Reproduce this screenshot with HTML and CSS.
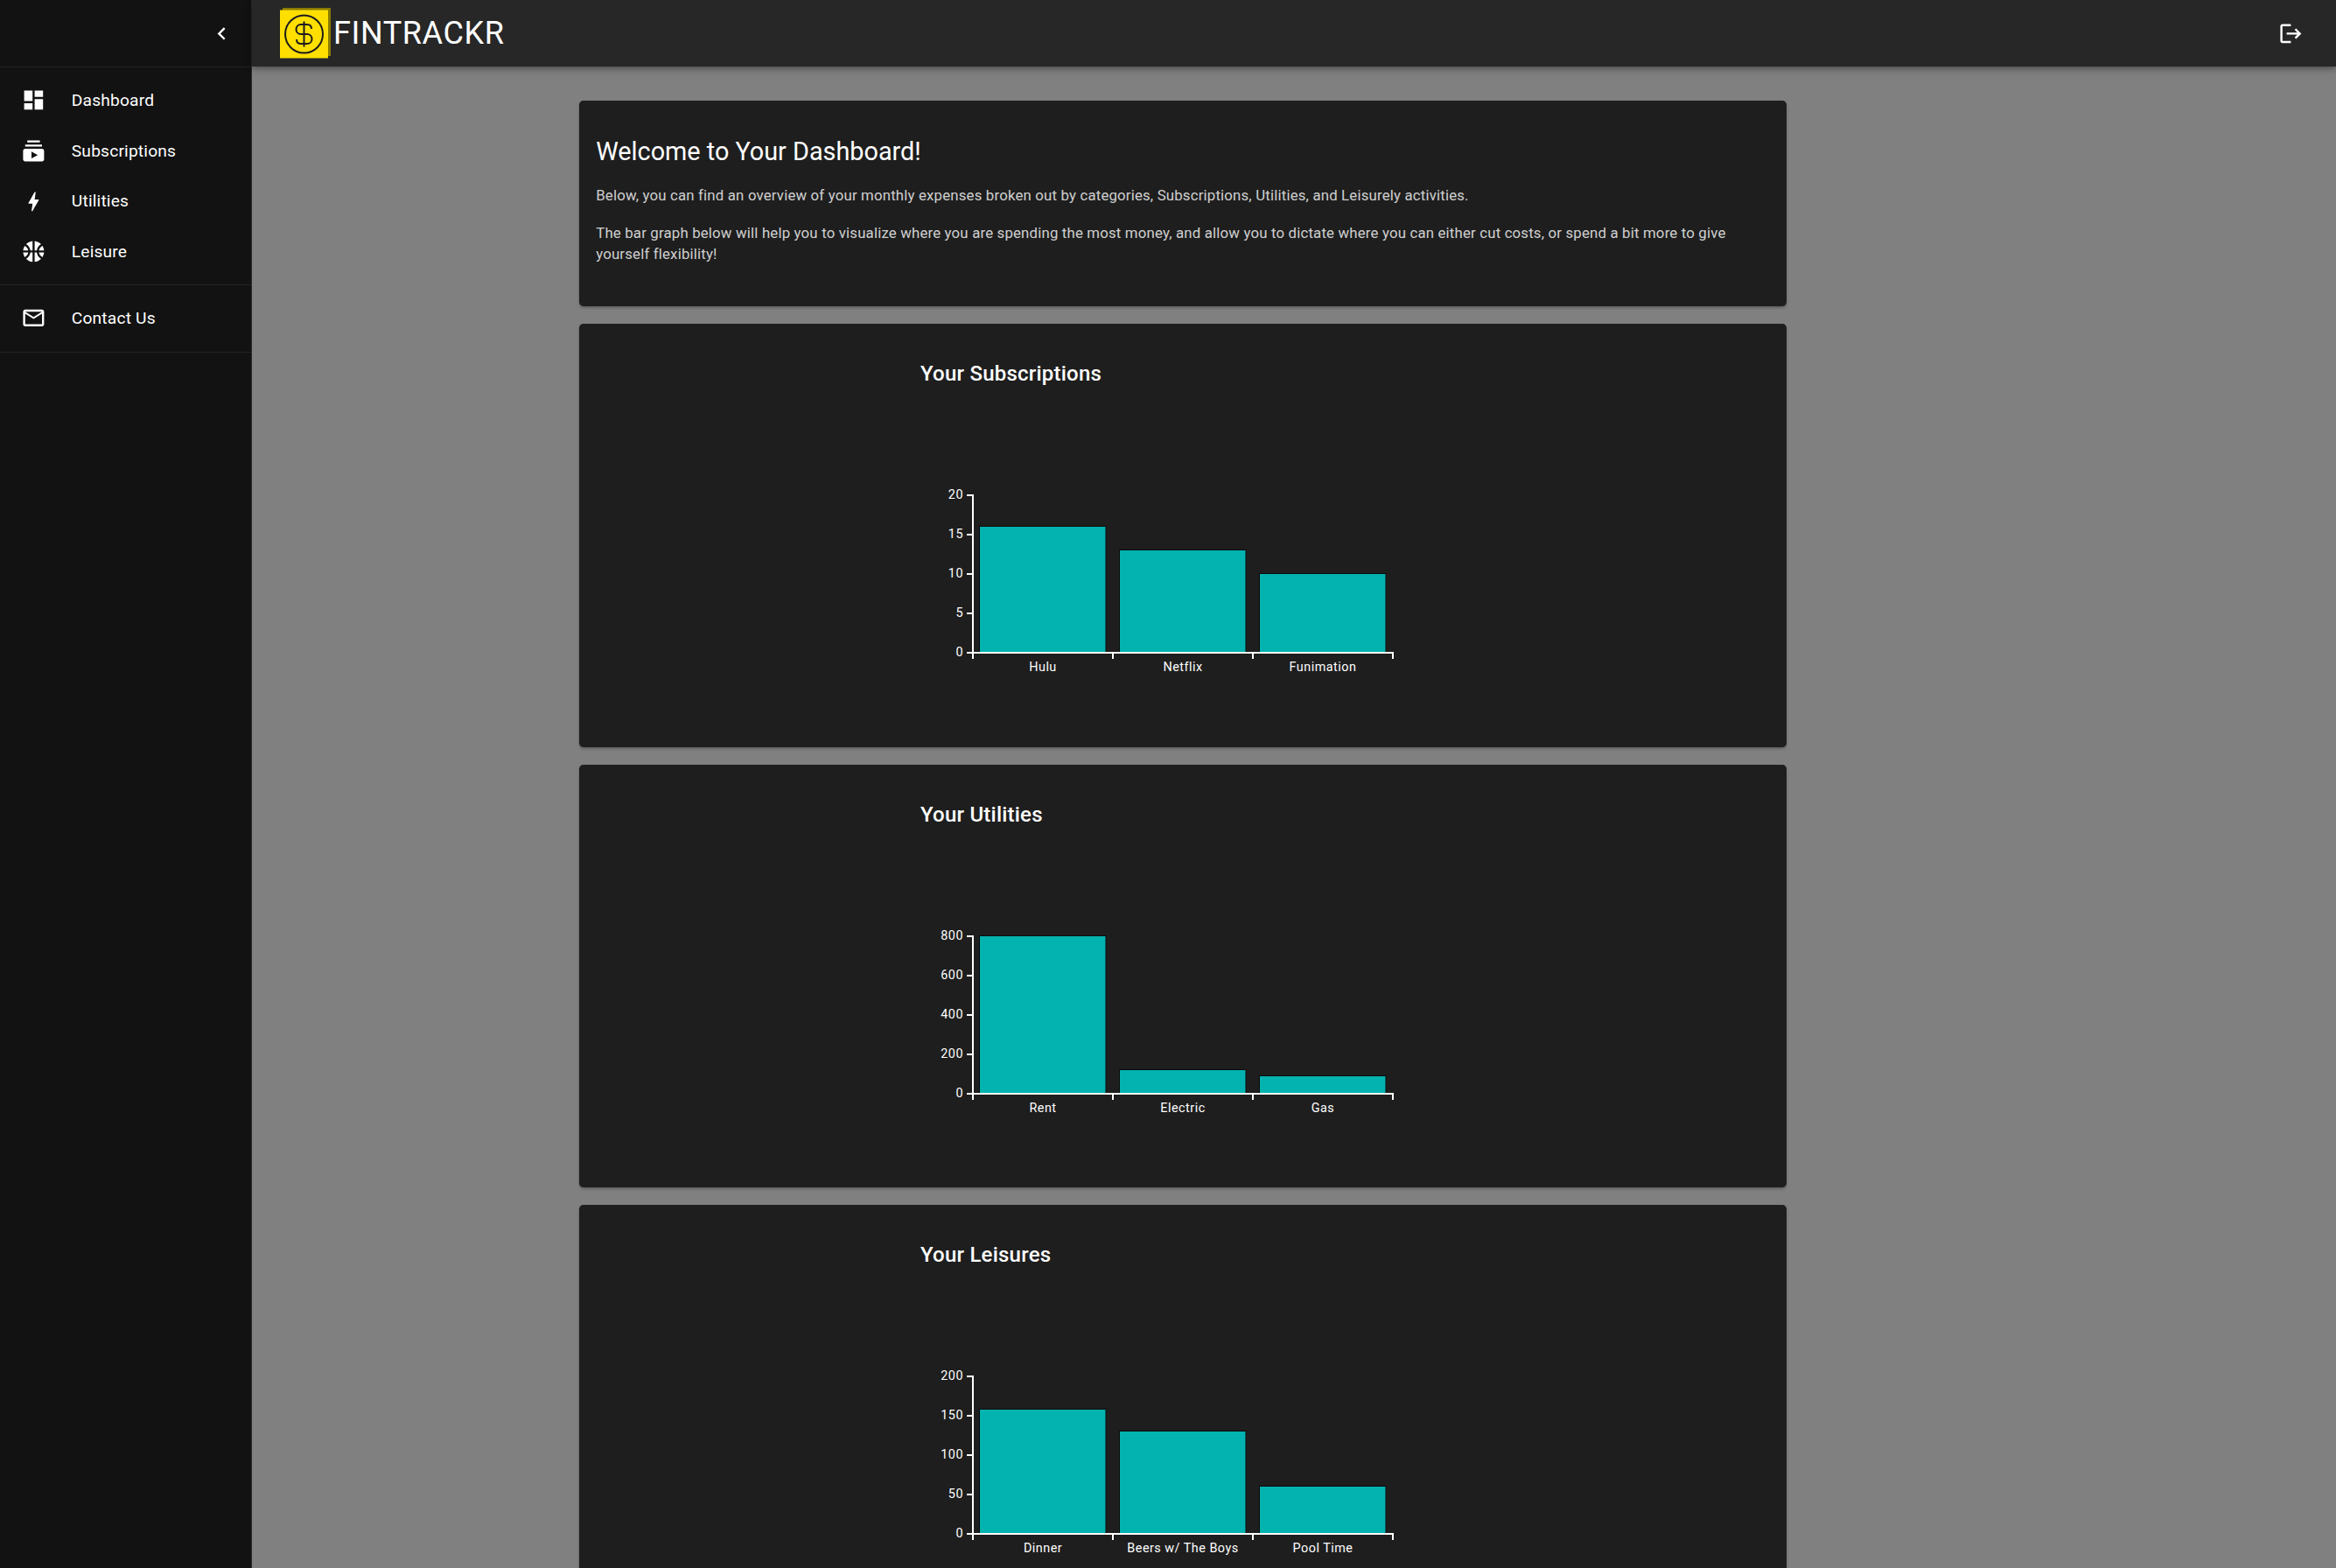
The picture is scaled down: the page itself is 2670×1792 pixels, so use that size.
FILE: index.html
```html
<!DOCTYPE html>
<html lang="en">
<head>
  <meta charset="UTF-8">
  <title>Fintrackr</title>
  <link rel="stylesheet" href="styles.css">
</head>
<body>
  <div class="app">
    <nav class="sidebar">
      <div class="sidebar-head">
        <svg class="icon" viewBox="0 0 24 24"><path d="M15.41 7.41 14 6l-6 6 6 6 1.41-1.41L10.83 12z"/></svg>
      </div>
      <ul class="nav-list">
        <li class="nav-item">
          <svg class="icon" viewBox="0 0 24 24"><path d="M3 13h8V3H3v10zm0 8h8v-6H3v6zm10 0h8V11h-8v10zm0-18v6h8V3h-8z"/></svg>
          <span>Dashboard</span>
        </li>
        <li class="nav-item">
          <svg class="icon" viewBox="0 0 24 24"><path d="M20 8H4V6h16v2zm-2-6H6v2h12V2zm4 10v8c0 1.1-.9 2-2 2H4c-1.1 0-2-.9-2-2v-8c0-1.1.9-2 2-2h16c1.1 0 2 .9 2 2zm-6 4-6-3.27v6.53L16 16z"/></svg>
          <span>Subscriptions</span>
        </li>
        <li class="nav-item">
          <svg class="icon" viewBox="0 0 24 24"><path d="M11 21h-1l1-7H7.5c-.58 0-.57-.32-.38-.66.19-.34.05-.08.07-.12C8.48 10.94 10.42 7.54 13 3h1l-1 7h3.5c.49 0 .56.33.47.51l-.07.15C12.96 17.55 11 21 11 21z"/></svg>
          <span>Utilities</span>
        </li>
        <li class="nav-item">
          <svg class="icon" viewBox="0 0 24 24"><path d="M17.09 11h4.86c-.16-1.61-.71-3.11-1.54-4.4-1.73.83-2.99 2.45-3.32 4.4zM6.91 11c-.33-1.95-1.59-3.57-3.32-4.4-.83 1.29-1.38 2.79-1.54 4.4h4.86zM15.07 11c.32-2.59 1.88-4.79 4.06-6-1.6-1.63-3.74-2.71-6.13-2.95V11h2.07zM8.93 11H11V2.05C8.61 2.29 6.46 3.37 4.87 5c2.18 1.21 3.74 3.41 4.06 6zM15.07 13H13v8.95c2.39-.24 4.54-1.32 6.13-2.95-2.18-1.21-3.74-3.41-4.06-6zM3.59 17.4c1.72-.83 2.99-2.46 3.32-4.4H2.05c.16 1.61.71 3.11 1.54 4.4zM17.09 13c.33 1.95 1.59 3.57 3.32 4.4.83-1.29 1.38-2.79 1.54-4.4h-4.86zM8.93 13c-.32 2.59-1.88 4.79-4.06 6 1.6 1.63 3.74 2.71 6.13 2.95V13H8.93z"/></svg>
          <span>Leisure</span>
        </li>
      </ul>
      <ul class="nav-list nav-list-last">
        <li class="nav-item">
          <svg class="icon" viewBox="0 0 24 24"><path d="M20 4H4c-1.1 0-1.99.9-1.99 2L2 18c0 1.1.9 2 2 2h16c1.1 0 2-.9 2-2V6c0-1.1-.9-2-2-2zm0 14H4V8l8 5 8-5v10zm-8-7L4 6h16l-8 5z"/></svg>
          <span>Contact Us</span>
        </li>
      </ul>
    </nav>

    <div class="content">
      <header class="topbar">
        <div class="brand">
          <svg class="logo" viewBox="0 0 58 58">
            <rect class="logo-shadow" x="3" y="0" width="55" height="55"/>
            <rect class="logo-face" x="0" y="2.5" width="55" height="55"/>
            <circle class="logo-line" cx="27.5" cy="30" r="21.5"/>
            <path class="logo-line" d="M36 24c0-3-2-5-5-5h-7c-3.3 0-5.5 2.4-5.5 5.5s2.2 5.5 5.5 5.5h7c3.3 0 5.5 2.4 5.5 5.5s-2.2 5.5-5.5 5.5h-7c-3 0-5-2-5-5M27.5 15.5v29"/>
          </svg>
          <span class="brand-name">FINTRACKR</span>
        </div>
        <svg class="icon" viewBox="0 0 24 24"><path d="m17 7-1.41 1.41L18.17 11H8v2h10.17l-2.58 2.58L17 17l5-5zM4 5h8V3H4c-1.1 0-2 .9-2 2v14c0 1.1.9 2 2 2h8v-2H4V5z"/></svg>
      </header>

      <main class="main">
        <section class="card intro">
          <h1>Welcome to Your Dashboard!</h1>
          <p>Below, you can find an overview of your monthly expenses broken out by categories, Subscriptions, Utilities, and Leisurely activities.</p>
          <p>The bar graph below will help you to visualize where you are spending the most money, and allow you to dictate where you can either cut costs, or spend a bit more to give yourself flexibility!</p>
        </section>

        <section class="card chart-card">
          <div class="chart-wrap">
            <h2>Your Subscriptions</h2>
            <svg class="chart" viewBox="0 0 600 360">
              <rect class="bar" x="67.5" y="155.5" width="144.5" height="144.5"/>
              <rect class="bar" x="227.5" y="182.5" width="144.5" height="117.5"/>
              <rect class="bar" x="387.5" y="209.5" width="144.5" height="90.5"/>
              <path class="axis" d="M53 120h7v180h480v7M53 165h7M53 210h7M53 255h7M53 300h7v7M220 300v7M380 300v7"/>
              <text class="tick-y" x="49" y="120">20</text>
              <text class="tick-y" x="49" y="165">15</text>
              <text class="tick-y" x="49" y="210">10</text>
              <text class="tick-y" x="49" y="255">5</text>
              <text class="tick-y" x="49" y="300">0</text>
              <text class="tick-x" x="140" y="317">Hulu</text>
              <text class="tick-x" x="300" y="317">Netflix</text>
              <text class="tick-x" x="460" y="317">Funimation</text>
            </svg>
          </div>
        </section>

        <section class="card chart-card">
          <div class="chart-wrap">
            <h2>Your Utilities</h2>
            <svg class="chart" viewBox="0 0 600 360">
              <rect class="bar" x="67.5" y="119.5" width="144.5" height="180.5"/>
              <rect class="bar" x="227.5" y="272.5" width="144.5" height="27.5"/>
              <rect class="bar" x="387.5" y="279.5" width="144.5" height="20.5"/>
              <path class="axis" d="M53 120h7v180h480v7M53 165h7M53 210h7M53 255h7M53 300h7v7M220 300v7M380 300v7"/>
              <text class="tick-y" x="49" y="120">800</text>
              <text class="tick-y" x="49" y="165">600</text>
              <text class="tick-y" x="49" y="210">400</text>
              <text class="tick-y" x="49" y="255">200</text>
              <text class="tick-y" x="49" y="300">0</text>
              <text class="tick-x" x="140" y="317">Rent</text>
              <text class="tick-x" x="300" y="317">Electric</text>
              <text class="tick-x" x="460" y="317">Gas</text>
            </svg>
          </div>
        </section>

        <section class="card chart-card">
          <div class="chart-wrap">
            <h2>Your Leisures</h2>
            <svg class="chart" viewBox="0 0 600 360">
              <rect class="bar" x="67.5" y="157.5" width="144.5" height="142.5"/>
              <rect class="bar" x="227.5" y="182.5" width="144.5" height="117.5"/>
              <rect class="bar" x="387.5" y="245.5" width="144.5" height="54.5"/>
              <path class="axis" d="M53 120h7v180h480v7M53 165h7M53 210h7M53 255h7M53 300h7v7M220 300v7M380 300v7"/>
              <text class="tick-y" x="49" y="120">200</text>
              <text class="tick-y" x="49" y="165">150</text>
              <text class="tick-y" x="49" y="210">100</text>
              <text class="tick-y" x="49" y="255">50</text>
              <text class="tick-y" x="49" y="300">0</text>
              <text class="tick-x" x="140" y="317">Dinner</text>
              <text class="tick-x" x="300" y="317">Beers w/ The Boys</text>
              <text class="tick-x" x="460" y="317">Pool Time</text>
            </svg>
          </div>
        </section>
      </main>
    </div>
  </div>
</body>
</html>
```

FILE: styles.css
```css
* { box-sizing: border-box; }
body { margin: 0; font-family: Roboto, "Liberation Sans", sans-serif; color: #fff; background: #808080; }

.app { display: flex; height: 100vh; overflow: hidden; }
.icon { width: 28.8px; height: 28.8px; fill: #fff; flex-shrink: 0; display: block; }

.sidebar { width: 288px; flex-shrink: 0; background: #121212; border-right: 1px solid #2a2a2a; }
.sidebar-head { height: 77px; display: flex; align-items: center; justify-content: flex-end; padding-right: 19px; border-bottom: 1px solid #232323; }
.nav-list { list-style: none; margin: 0; padding: 9px 0; border-bottom: 1px solid #232323; }
.nav-list-last { padding: 8px 0 10px; }
.nav-item { height: 57.6px; display: flex; align-items: center; gap: 29px; padding-left: 24px; font-size: 19.2px; letter-spacing: .18px; }

.content { flex: 1; min-width: 0; display: flex; flex-direction: column; }
.topbar { height: 76px; flex-shrink: 0; display: flex; align-items: center; justify-content: space-between; padding: 0 37px 0 32px; background: #272727; box-shadow: 0 2px 5px rgba(0,0,0,.3), 0 5px 10px rgba(0,0,0,.14); position: relative; }
.brand { display: flex; align-items: center; gap: 3px; }
.logo { width: 58px; height: 58px; display: block; }
.logo-shadow { fill: #8a7a00; }
.logo-face { fill: #ffdf00; }
.logo-line { fill: none; stroke: #1c1c1c; stroke-width: 2; }
.brand-name { font-size: 36px; font-weight: 400; letter-spacing: .6px; }

.main { flex: 1; min-height: 0; overflow: hidden; padding: 39px 0 0 374px; display: flex; flex-direction: column; gap: 20px; }
.card { width: 1380px; flex-shrink: 0; background: #1e1e1e; border-radius: 4.8px; box-shadow: 0 2px 3px rgba(0,0,0,.25); }

.intro { height: 235px; padding: 39px 19.2px 0; }
.intro h1 { margin: 0 0 19px; font-size: 28.8px; font-weight: 400; line-height: 38.4px; }
.intro p { margin: 0 0 19px; font-size: 16.8px; line-height: 24px; letter-spacing: .18px; color: rgba(255,255,255,.8); }

.chart-card { height: 483.6px; padding-top: 38px; }
.chart-wrap { width: 600px; margin: 0 auto; }
.chart-wrap h2 { margin: 0; font-size: 24px; font-weight: 500; line-height: 38px; letter-spacing: .22px; }
.chart { display: block; width: 600px; height: 360px; }
.bar { fill: #03b3b0; stroke: #0a0a0a; stroke-width: 1; }
.axis { fill: none; stroke: #fff; stroke-width: 2; }
.tick-y, .tick-x { fill: #fff; font-size: 14.4px; letter-spacing: .48px; }
.tick-y { text-anchor: end; dominant-baseline: middle; }
.tick-x { text-anchor: middle; dominant-baseline: middle; }
```
